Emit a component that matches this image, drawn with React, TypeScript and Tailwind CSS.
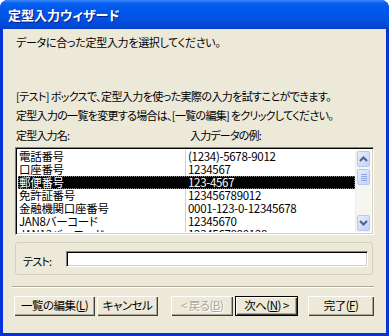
import React from "react";

const rows: [string, string][] = [
  ["電話番号", "(1234)-5678-9012"],
  ["口座番号", "1234567"],
  ["郵便番号", "123-4567"],
  ["免許証番号", "123456789012"],
  ["金融機関口座番号", "0001-123-0-12345678"],
  ["JAN8バーコード", "12345670"],
  ["JAN13バーコード", "1234567890128"],
];

const font = "font-['MS_UI_Gothic','Noto_Sans_CJK_JP',sans-serif] [font-feature-settings:'palt']";

function Arrow({ up }: { up: boolean }) {
  return (
    <svg width="9" height="6" viewBox="0 0 9 6">
      <path
        d={up ? "M1 5 L4.5 1.5 L8 5" : "M1 1 L4.5 4.5 L8 1"}
        fill="none"
        stroke="#4d6185"
        strokeWidth="2"
      />
    </svg>
  );
}

function Btn({
  children,
  w,
  def,
  disabled,
}: {
  children: React.ReactNode;
  w: string;
  def?: boolean;
  disabled?: boolean;
}) {
  return (
    <div
      className={`${w} h-[20px] flex items-center justify-center bg-[#ece9d8] text-[11.5px] tracking-[-0.5px] leading-none whitespace-nowrap ${
        def
          ? "border border-black shadow-[inset_1px_1px_0_#fff,inset_-1px_-1px_0_#404040,inset_-2px_-2px_0_#aca899]"
          : "shadow-[inset_1px_1px_0_#fff,inset_-1px_-1px_0_#404040,inset_-2px_-2px_0_#aca899]"
      } ${disabled ? "text-[#aca899] [text-shadow:1px_1px_0_#fff]" : "text-black"}`}
    >
      {children}
    </div>
  );
}

export default function App() {
  return (
    <div className={`w-[390px] h-[336px] bg-white ${font}`}>
      <div className="w-[389px] h-[336px] flex flex-col rounded-t-[8px] bg-[#0831d9] overflow-hidden">
        <div className="h-[29px] shrink-0 flex items-center pl-[8px] bg-[linear-gradient(180deg,#3d8bff_0px,#0a61ef_3px,#0058ee_8px,#0054e3_18px,#0049d6_26px,#0a3fc8_29px)]">
          <span className="text-white font-bold text-[13px] leading-none [text-shadow:1px_1px_0_#0a1e8c]">
            定型入力ウィザード
          </span>
        </div>
        <div className="flex-1 mx-[3px] mb-[3px] bg-[#ece9d8] flex flex-col pl-[12px] pr-[12px] text-[11px] tracking-[-0.8px] text-black whitespace-nowrap">
          <div className="mt-[7px] h-[13px] leading-[13px] pl-[1px] tracking-[-0.3px]">データに合った定型入力を選択してください。</div>
          <div className="mt-[41px] h-[13px] leading-[13px] pl-[1px] tracking-[-0.6px]">[テスト] ボックスで、定型入力を使った実際の入力を試すことができます。</div>
          <div className="mt-[6px] h-[13px] leading-[13px] pl-[1px] tracking-[-0.7px]">定型入力の一覧を変更する場合は、[一覧の編集] をクリックしてください。</div>
          <div className="mt-[7px] h-[13px] leading-[13px] pl-[1px] flex">
            <span className="w-[174px]">定型入力名:</span>
            <span>入力データの例:</span>
          </div>
          <div className="mt-[5px] h-[88px] w-[359px] flex bg-white border border-t-[#848284] border-l-[#848284] border-b-white border-r-white shadow-[inset_1px_1px_0_#000,inset_-1px_-1px_0_#d4d0c8] p-[2px] pr-[2px] text-[11.5px] tracking-[-0.3px]">
            <div className="flex-1 relative overflow-hidden">
              <div className="absolute left-[167px] top-0 bottom-0 w-px bg-[#d4d0c8]" />
              {rows.map(([a, b], i) => (
                <div
                  key={i}
                  className={`h-[13px] leading-[13px] flex relative ${
                    i === 2 ? "bg-black text-white outline outline-1 outline-dotted outline-offset-[-1px] outline-[#808080]" : ""
                  }`}
                >
                  <span className="w-[170px] pl-[1px] whitespace-nowrap overflow-hidden">{a}</span>
                  <span className="whitespace-nowrap">{b}</span>
                </div>
              ))}
            </div>
            <div className="w-[16px] flex flex-col bg-[#f7f5ef] border-l border-[#eeede5]">
              <div className="h-[16px] m-px rounded-[2px] border border-[#b4c8f6] bg-[linear-gradient(135deg,#e6eefc,#c1d3fb)] flex items-center justify-center">
                <Arrow up />
              </div>
              <div className="h-[16px] mx-px mt-[1px] rounded-[2px] border border-[#b4c8f6] bg-[linear-gradient(135deg,#e6eefc,#c1d3fb)] flex flex-col items-center justify-center gap-[1px]">
                <div className="w-[6px] h-px bg-[#8ca5dc]" />
                <div className="w-[6px] h-px bg-[#8ca5dc]" />
                <div className="w-[6px] h-px bg-[#8ca5dc]" />
                <div className="w-[6px] h-px bg-[#8ca5dc]" />
              </div>
              <div className="flex-1" />
              <div className="h-[16px] m-px rounded-[2px] border border-[#b4c8f6] bg-[linear-gradient(135deg,#e6eefc,#c1d3fb)] flex items-center justify-center">
                <Arrow up={false} />
              </div>
            </div>
          </div>
          <div className="mt-[7px] h-[33px] w-[358px] rounded-[3px] border border-[#d0d0bf] flex items-center pl-[7px]">
            <span className="w-[43px] leading-[13px] mt-[5px]">テスト:</span>
            <div className="w-[302px] h-[16px] bg-white border border-t-[#848284] border-l-[#848284] border-b-white border-r-white shadow-[inset_1px_1px_0_#000,inset_-1px_-1px_0_#d4d0c8]" />
          </div>
          <div className="mt-[11px] h-[2px] w-[362px] -ml-[3px] border-t border-t-[#aca899] border-b border-b-white" />
          <div className="mt-[8px] flex items-center -ml-[1px]">
            <Btn w="w-[81px]">
              一覧の編集(<span className="underline">L</span>)
            </Btn>
            <div className="w-[2px]" />
            <Btn w="w-[61px]">キャンセル</Btn>
            <div className="w-[13px]" />
            <Btn w="w-[62px]" disabled>
              &lt; 戻る(<span className="underline">B</span>)
            </Btn>
            <div className="w-[2px]" />
            <Btn w="w-[63px]" def>
              次へ(<span className="underline">N</span>) &gt;
            </Btn>
            <div className="w-[10px]" />
            <Btn w="w-[66px]">
              完了(<span className="underline">F</span>)
            </Btn>
          </div>
        </div>
      </div>
    </div>
  );
}
